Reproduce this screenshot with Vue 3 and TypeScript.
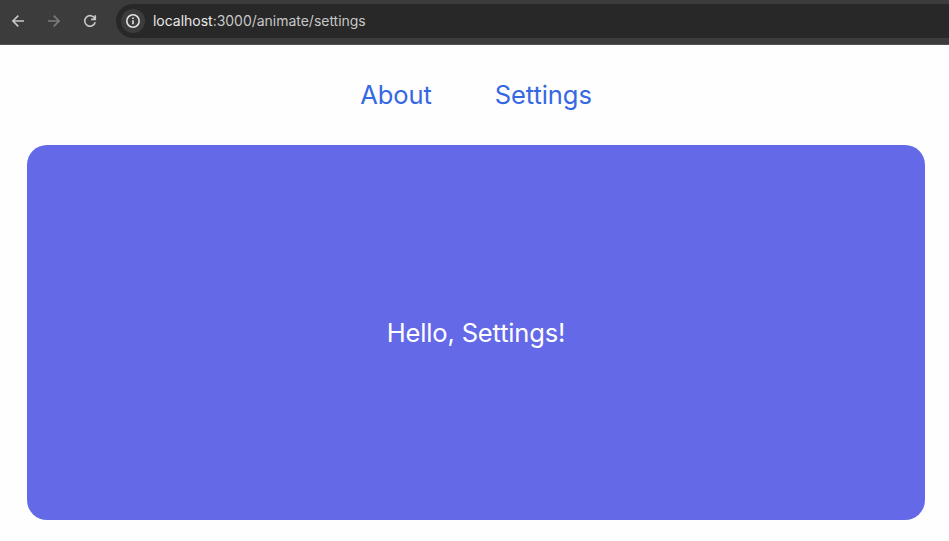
<script setup lang="ts">
import { ref } from 'vue'

interface Tab {
  label: string
  path: string
}

const tabs: Tab[] = [
  { label: 'About', path: '/animate/about' },
  { label: 'Settings', path: '/animate/settings' },
]
const current = ref<Tab>(tabs[1])
</script>

<template>
  <div class="window">
    <header class="toolbar">
      <button class="tool" aria-label="Back">
        <svg viewBox="0 0 16 16"><path d="M14 8H3.2M8.3 2.6 2.9 8l5.4 5.4" /></svg>
      </button>
      <button class="tool disabled" aria-label="Forward">
        <svg viewBox="0 0 16 16"><path d="M2 8h10.8M7.7 2.6 13.1 8l-5.4 5.4" /></svg>
      </button>
      <button class="tool" aria-label="Reload">
        <svg viewBox="0 0 16 16"><path d="M12.8 5.6A5.3 5.3 0 1 0 13.2 9.2M13.3 2.2v4.2H9.1" /></svg>
      </button>
      <div class="address">
        <span class="site-info">
          <svg viewBox="0 0 16 16">
            <circle cx="8" cy="8" r="6.2" />
            <path d="M8 7.2v4M8 4.5v1.6" />
          </svg>
        </span>
        <span class="url"><span class="host">localhost</span>:3000{{ current.path }}</span>
      </div>
    </header>
    <main class="page">
      <nav class="nav">
        <a v-for="tab in tabs" :key="tab.path" class="link" @click="current = tab">{{ tab.label }}</a>
      </nav>
      <section class="panel">
        <p class="greeting">Hello, {{ current.label }}!</p>
      </section>
    </main>
  </div>
</template>

<style>
body {
  background: #fefefe;
}
</style>

<style scoped>
.window {
  box-sizing: border-box;
  height: 541px;
  display: flex;
  flex-direction: column;
  overflow: hidden;
  font-family: Inter, sans-serif;
}
.toolbar {
  box-sizing: border-box;
  height: 45px;
  flex: none;
  display: flex;
  align-items: flex-start;
  padding: 4px 0 0 8px;
  background: #3c3c3c;
  border-bottom: 1px solid #505050;
}
.tool {
  width: 20px;
  height: 34px;
  margin-right: 16px;
  padding: 0;
  border: 0;
  background: none;
  display: flex;
  align-items: center;
  justify-content: center;
  color: #c7c7c7;
}
.tool.disabled {
  color: #7c7c7c;
}
svg {
  display: block;
  width: 16px;
  height: 16px;
  fill: none;
  stroke: currentColor;
  stroke-width: 1.6;
}
.address {
  flex: 1;
  height: 34px;
  box-sizing: border-box;
  display: flex;
  align-items: center;
  gap: 8px;
  padding-left: 5px;
  border-radius: 17px 0 0 17px;
  background: #282828;
}
.site-info {
  width: 24px;
  height: 24px;
  border-radius: 50%;
  background: #3c3c3c;
  color: #e3e3e3;
  display: flex;
  align-items: center;
  justify-content: center;
}
.url {
  font-size: 14px;
  letter-spacing: -0.02px;
  line-height: 20px;
  color: #c7c7c7;
}
.host {
  color: #e8e8e8;
}
.page {
  flex: 1;
  display: flex;
  flex-direction: column;
  padding: 32px 24px 21px 27px;
}
.nav {
  display: flex;
  justify-content: center;
  gap: 63px;
  height: 68px;
}
.link {
  font-size: 25.5px;
  letter-spacing: -0.08px;
  line-height: 36px;
  color: #3568e3;
  cursor: pointer;
}
.panel {
  flex: 1;
  display: flex;
  align-items: center;
  justify-content: center;
  border-radius: 20px;
  background: #6469e8;
}
.greeting {
  margin: 0;
  font-size: 25.5px;
  letter-spacing: -0.15px;
  line-height: 36px;
  color: #fff;
}
</style>
